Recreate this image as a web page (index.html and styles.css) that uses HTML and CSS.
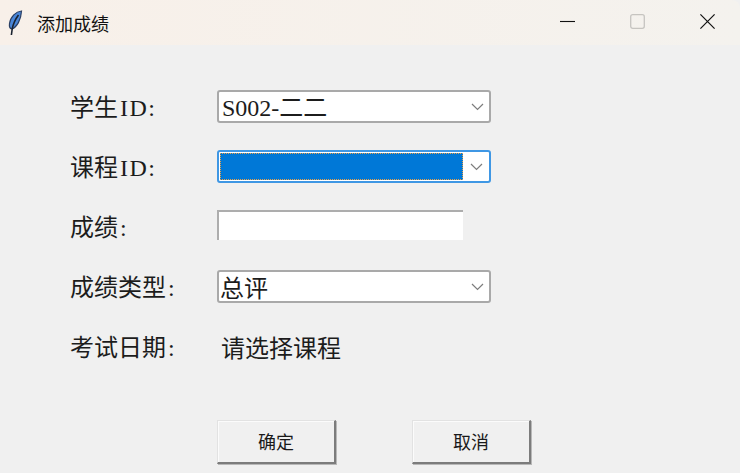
FILE: index.html
```html
<!DOCTYPE html>
<html lang="zh-CN">
<head>
    <meta charset="utf-8">
    <title>添加成绩</title>
    <link rel="stylesheet" href="styles.css">
</head>
<body>

<div class="titlebar">
    <svg class="app-icon" width="16" height="26" viewBox="0 0 16 26">
        <path d="M14.5 1 C9 1.5 3.5 6.5 2.5 13.5 C2.1 16.5 3 18.6 4.8 19 C10 17 14 10 14.5 1 Z" fill="#4a86d8" stroke="#2b3f63" stroke-width="1.2"/>
        <path d="M11.5 5 C8.5 9 6.2 13.5 5.2 19 L4.4 25" fill="none" stroke="#1a2230" stroke-width="1.6"/>
    </svg>
    <span class="title">添加成绩</span>
    <div class="win-btns">
        <svg class="win-btn" width="15" height="15" viewBox="0 0 15 15"><path d="M0 7.5 H15" stroke="#111" stroke-width="1.1"/></svg>
        <svg class="win-btn" width="15" height="15" viewBox="0 0 15 15"><rect x="0.7" y="0.7" width="13.6" height="13.6" rx="2" fill="none" stroke="#c6c4c0" stroke-width="1.3"/></svg>
        <svg class="win-btn" width="15" height="15" viewBox="0 0 15 15"><path d="M0.4 0.4 L14.6 14.6 M14.6 0.4 L0.4 14.6" stroke="#111" stroke-width="1.2"/></svg>
    </div>
</div>

<div class="form">
    <div class="row">
        <span class="label">学生<span class="latin">ID:</span></span>
        <div class="combo">
            <span class="combo-text"><span class="code">S002-</span>二二</span>
            <svg class="arrow" width="13" height="8" viewBox="0 0 13 8"><path d="M1 1 L6.5 6.5 L12 1" fill="none" stroke="#7d7d7d" stroke-width="1.2"/></svg>
        </div>
    </div>
    <div class="row">
        <span class="label">课程<span class="latin">ID:</span></span>
        <div class="combo focused">
            <span class="combo-sel"></span>
            <svg class="arrow" width="13" height="8" viewBox="0 0 13 8"><path d="M1 1 L6.5 6.5 L12 1" fill="none" stroke="#7d7d7d" stroke-width="1.2"/></svg>
        </div>
    </div>
    <div class="row">
        <span class="label">成绩<span class="latin">:</span></span>
        <div class="entry"></div>
    </div>
    <div class="row">
        <span class="label">成绩类型<span class="latin">:</span></span>
        <div class="combo">
            <span class="combo-text">总评</span>
            <svg class="arrow" width="13" height="8" viewBox="0 0 13 8"><path d="M1 1 L6.5 6.5 L12 1" fill="none" stroke="#7d7d7d" stroke-width="1.2"/></svg>
        </div>
    </div>
    <div class="row">
        <span class="label">考试日期<span class="latin">:</span></span>
        <span class="value">请选择课程</span>
    </div>
    <div class="buttons">
        <div class="btn">确定</div>
        <div class="btn">取消</div>
    </div>
</div>

</body>
</html>
```

FILE: styles.css
```css
html, body {
    margin: 0;
    height: 473px;
    overflow: hidden;
}

body {
    background-color: #f0f0f0;
    color: #1c1c1c;
    font-family: "Noto Sans CJK SC", sans-serif;
}

/* Title bar */
.titlebar {
    height: 45px;
    display: flex;
    align-items: center;
    padding-left: 7px;
    background: linear-gradient(90deg, #f8f0e9, #f4f2ee);
    border-top-right-radius: 8px;
    box-sizing: border-box;
}

.app-icon {
    margin-right: 14px;
}

.title {
    font-size: 18px;
    color: #111;
}

.win-btns {
    margin: -2px 0 0 auto;
    display: flex;
    gap: 55px;
    padding-right: 25px;
}

/* Form rows */
.form {
    padding: 45px 0 0 70px;
}

.row {
    display: flex;
    align-items: center;
    height: 33px;
    margin-bottom: 27px;
}

.label {
    width: 147px;
    flex-shrink: 0;
    font-size: 24px;
    line-height: 33px;
    white-space: nowrap;
}

.latin {
    font-family: "Liberation Serif", serif;
    letter-spacing: 1.5px;
    padding-left: 2px;
}

.code {
    font-family: "Liberation Serif", serif;
    padding-left: 2px;
}

.value {
    font-size: 24px;
    line-height: 33px;
    padding-left: 4px;
}

.combo {
    width: 274px;
    height: 33px;
    box-sizing: border-box;
    display: flex;
    align-items: center;
    background-color: #fff;
    border: 2px solid #a9a9a9;
    border-radius: 3px;
}

.combo-text {
    font-size: 24px;
    line-height: 29px;
    padding-left: 1px;
    white-space: nowrap;
}

.arrow {
    margin-left: auto;
    margin-right: 5px;
}

.combo.focused {
    border-color: #3f97e4;
    padding: 1px;
}

.combo-sel {
    width: 243px;
    height: 100%;
    background-color: #0078d7;
    outline: 1px dotted #e8a04a;
    outline-offset: -1px;
}

.entry {
    width: 246px;
    height: 30px;
    align-self: flex-start;
    box-sizing: border-box;
    background-color: #fff;
    border-top: 2px solid #adadad;
    border-left: 2px solid #adadad;
}

/* Buttons */
.buttons {
    display: flex;
    gap: 76px;
    margin: 57px 0 0 147px;
}

.btn {
    width: 119px;
    height: 44px;
    padding-bottom: 1px;
    box-sizing: border-box;
    display: flex;
    align-items: center;
    justify-content: center;
    background-color: #f0f0f0;
    border-style: solid;
    border-width: 1px 2px 2px 1px;
    border-color: #e2e2e2 #7c7c7c #7c7c7c #e2e2e2;
    box-shadow: inset 1px 1px 0 #fbfbfb, 1px 1px 0 #b8b8b8;
    font-size: 18px;
    color: #1a1a1a;
}
```
